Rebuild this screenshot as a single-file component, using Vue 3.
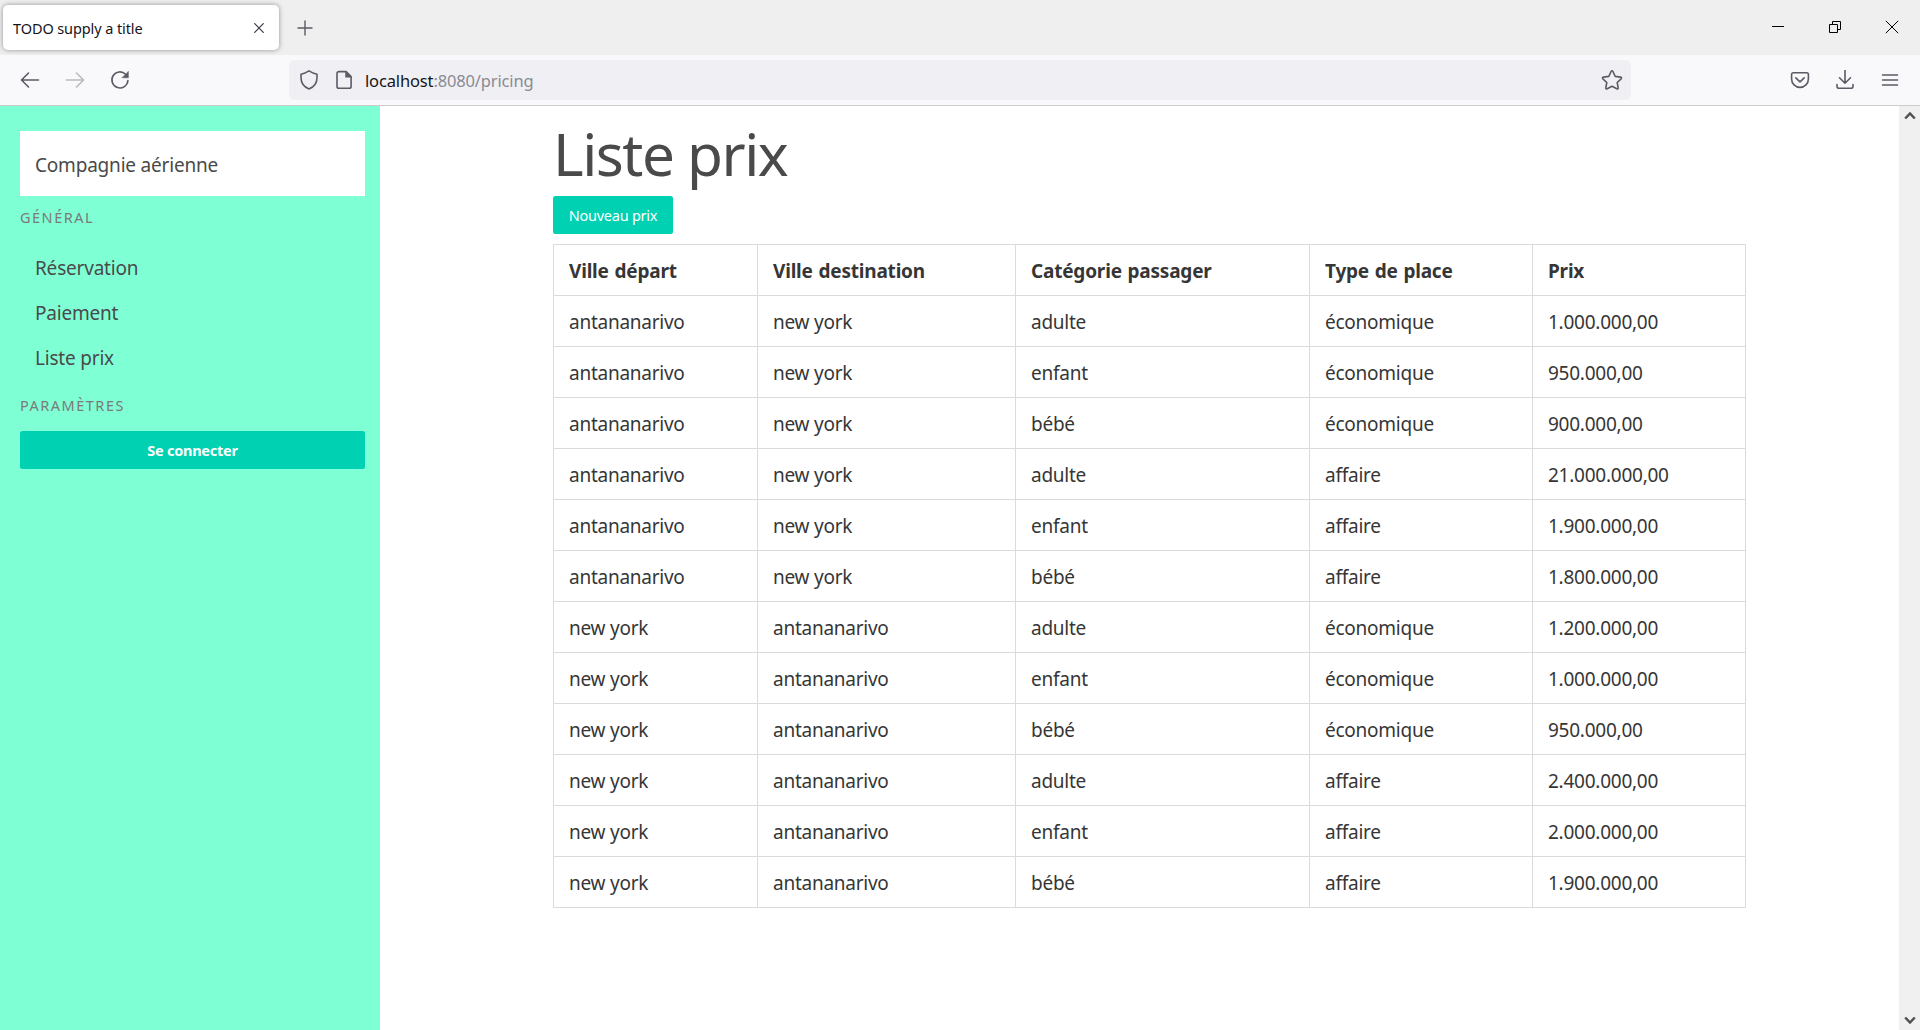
<script setup>
const headers = ['Ville départ', 'Ville destination', 'Catégorie passager', 'Type de place', 'Prix']
const tana = 'antananarivo'
const ny = 'new york'
const rows = [
  [tana, ny, 'adulte', 'économique', '1.000.000,00'],
  [tana, ny, 'enfant', 'économique', '950.000,00'],
  [tana, ny, 'bébé', 'économique', '900.000,00'],
  [tana, ny, 'adulte', 'affaire', '21.000.000,00'],
  [tana, ny, 'enfant', 'affaire', '1.900.000,00'],
  [tana, ny, 'bébé', 'affaire', '1.800.000,00'],
  [ny, tana, 'adulte', 'économique', '1.200.000,00'],
  [ny, tana, 'enfant', 'économique', '1.000.000,00'],
  [ny, tana, 'bébé', 'économique', '950.000,00'],
  [ny, tana, 'adulte', 'affaire', '2.400.000,00'],
  [ny, tana, 'enfant', 'affaire', '2.000.000,00'],
  [ny, tana, 'bébé', 'affaire', '1.900.000,00'],
]
const links = ['Réservation', 'Paiement', 'Liste prix']
</script>

<template>
  <div class="window">
    <header class="titlebar">
      <div class="tab">
        <span class="tab-title">TODO supply a title</span>
        <svg class="tab-close" width="12" height="12" viewBox="0 0 12 12"><path d="M1.7 1.7l8.6 8.6M10.3 1.7l-8.6 8.6" /></svg>
      </div>
      <svg class="new-tab" width="16" height="16" viewBox="0 0 16 16"><path d="M8 1v14M1 8h14" /></svg>
      <div class="controls">
        <svg width="14" height="14" viewBox="0 0 14 14"><path d="M1 6.5h12" /></svg>
        <svg width="14" height="14" viewBox="0 0 14 14"><path d="M1.5 4.5h8v8h-8zM4.5 4.5v-3h8v8h-3" /></svg>
        <svg width="14" height="14" viewBox="0 0 14 14"><path d="M.8 .8l12.4 12.4M13.2 .8L.8 13.2" /></svg>
      </div>
    </header>

    <nav class="toolbar">
      <div class="nav-buttons">
        <svg width="20" height="20" viewBox="0 0 20 20"><path d="M18.500 10H2.100M8.500 3l-7 7 7 7" /></svg>
        <svg class="dim" width="20" height="20" viewBox="0 0 20 20"><path d="M1.500 10h16.400M11.500 3l7 7-7 7" /></svg>
        <svg width="20" height="20" viewBox="0 0 20 20"><path d="M17.900 10.500a8 8 0 1 1-2.300-6.200" /><path class="solid" d="M18.400 1.600v6.200h-6.200z" /></svg>
      </div>
      <div class="urlbar">
        <svg class="shield" width="20" height="20" viewBox="0 0 20 20"><path d="M10 .9q3.700 2.400 8 3.300v3.300c0 5-2.800 9.400-8 11.500-5.200-2.100-8-6.500-8-11.500v-3.300q4.300-.9 8-3.300z" /></svg>
        <svg class="page" width="20" height="20" viewBox="0 0 20 20"><path d="M4.900 1.600h7.300l4.900 4.900v9.900a1.900 1.900 0 0 1-1.900 1.900h-10.300a1.900 1.900 0 0 1-1.900-1.900v-12.900a1.900 1.900 0 0 1 1.900-1.900z" /><path class="solid" d="M11.500 1.500v5.700h5.700z" /></svg>
        <div class="url"><span class="host">localhost</span><span>:8080/pricing</span></div>
        <svg class="star" width="22" height="22" viewBox="0 0 22 22"><path d="M10.100 2.500q.9-1.600 1.800 0l2.300 4.900 5.300.7q1.700.4.600 1.700l-3.900 3.700 1 5.300q.1 1.600-1.400 1l-4.800-2.600-4.800 2.600q-1.500.6-1.400-1l1-5.300-3.900-3.700q-1.100-1.300.6-1.700l5.300-.7z" /></svg>
      </div>
      <div class="actions">
        <svg width="20" height="20" viewBox="0 0 20 20"><path d="M3.300 2.800h13.400a1.700 1.700 0 0 1 1.700 1.700v4.500a8.400 8.400 0 0 1-16.800 0v-4.500a1.700 1.700 0 0 1 1.700-1.700z" /><path d="M5.800 7.800l4.200 4 4.200-4" /></svg>
        <svg width="20" height="20" viewBox="0 0 20 20"><path d="M10 .5v12.500M4.500 7.800l5.500 5.400 5.500-5.400M2 14.500v1.800a2 2 0 0 0 2 2h12a2 2 0 0 0 2-2v-1.800" /></svg>
        <svg width="20" height="20" viewBox="0 0 20 20"><path d="M2.500 5h15M2.500 10h15M2.500 15h15" /></svg>
      </div>
    </nav>

    <main class="viewport">
      <aside class="sidebar">
        <div class="brand">Compagnie aérienne</div>
        <p class="label">Général</p>
        <ul class="menu">
          <li v-for="link in links" :key="link">{{ link }}</li>
        </ul>
        <p class="label">Paramètres</p>
        <button class="button login">Se connecter</button>
      </aside>
      <section class="content">
        <h1>Liste prix</h1>
        <button class="button add">Nouveau prix</button>
        <table>
          <colgroup><col class="c1" /><col class="c2" /><col class="c3" /><col class="c4" /><col class="c5" /></colgroup>
          <thead>
            <tr><th v-for="h in headers" :key="h">{{ h }}</th></tr>
          </thead>
          <tbody>
            <tr v-for="(row, i) in rows" :key="i"><td v-for="(cell, j) in row" :key="j">{{ cell }}</td></tr>
          </tbody>
        </table>
      </section>
      <div class="scrollbar">
        <svg width="12" height="10" viewBox="0 0 12 10"><path d="M1.200 7.500l4.800-5 4.800 5" /></svg>
        <svg width="12" height="10" viewBox="0 0 12 10"><path d="M1.200 2.500l4.800 5 4.800-5" /></svg>
      </div>
    </main>
  </div>
</template>

<style>
body { margin: 0; overflow: hidden; }
</style>

<style scoped>
* { box-sizing: border-box; }
.window { width: 1920px; height: 1030px; display: flex; flex-direction: column; background: #fff; font-family: "Noto Sans", "Open Sans", sans-serif; color: #363636; }
svg { display: block; flex: none; fill: none; stroke: #5b5b66; stroke-width: 1.6; stroke-linecap: round; stroke-linejoin: round; }
.solid { fill: #5b5b66; stroke-width: .5; }

.titlebar { height: 55px; flex: none; display: flex; align-items: center; background: #efefef; }
.tab { width: 276px; flex: none; height: 45px; margin-left: 3px; padding: 0 14px 0 10px; display: flex; align-items: center; justify-content: space-between; background: #fff; border-radius: 5px; box-shadow: 0 0 5px rgba(0, 0, 0, .4); color: #15141a; font-size: 14.500px; letter-spacing: -.1px; white-space: nowrap; }
.tab-title { padding-top: 1px; }
.tab-close { stroke: #3a3a40; stroke-width: 1.2; }
.new-tab { margin-left: 18px; stroke-width: 1.4; }
.controls { margin: 0 21px 1px auto; display: flex; gap: 43px; }
.controls svg { stroke: #000; stroke-width: 1; stroke-linecap: butt; stroke-linejoin: miter; }

.toolbar { height: 51px; flex: none; display: flex; align-items: center; background: #f9f9fb; border-bottom: 1px solid #ccccd0; }
.nav-buttons { width: 289px; flex: none; padding-left: 20px; display: flex; gap: 25px; }
.dim { opacity: .4; }
.urlbar { width: 1342px; flex: none; height: 40px; padding: 0 8px 0 10px; display: flex; align-items: center; background: #f0f0f4; border-radius: 5px; }
.page { margin-left: 15px; }
.url { margin-left: 11px; font-size: 16.500px; color: #8a8a92; letter-spacing: -.15px; line-height: 24px; padding-top: 2px; }
.host { color: #15141a; }
.star { margin-left: auto; }
.actions { margin-left: auto; margin-right: 20px; display: flex; gap: 25px; }

.viewport { flex: 1; min-height: 0; display: flex; }
.sidebar { width: 380px; flex: none; padding: 25px 15px 0 20px; background: #7fffd4; color: #4a4a4a; font-size: 19px; letter-spacing: -.2px; }
.brand { height: 65px; padding: 18px 15px 0; background: #fff; line-height: 32px; }
.label { margin: 0; height: 20px; color: #7a7a7a; font-size: 14.500px; line-height: 20px; letter-spacing: 1.500px; text-transform: uppercase; }
.brand + .label { margin-top: 11px; }
.menu { list-style: none; margin: 19px 0 14px; padding: 0 15px; }
.menu li { height: 45px; line-height: 45px; }
.button { display: block; height: 38px; padding: 0; border: 0; border-radius: 2.500px; background: #00d1b2; color: #fff; font-family: inherit; font-size: 14.500px; line-height: 38px; letter-spacing: -.25px; }
.login { width: 345px; margin-top: 16px; font-weight: 700; }
.add { width: 120px; }

.content { flex: 1; padding-left: 173px; }
h1 { margin: 0; height: 90px; color: #4a4a4a; font-size: 58.500px; font-weight: 400; line-height: 95px; letter-spacing: -1.500px; }
table { width: 1193px; margin-top: 10px; table-layout: fixed; border-collapse: separate; border-spacing: 0; border: solid #dbdbdb; border-width: 1px 0 0 1px; font-size: 19px; letter-spacing: -.25px; }
th, td { height: 51px; padding: 2px 15px 0; border: solid #dbdbdb; border-width: 0 1px 1px 0; text-align: left; line-height: 30px; white-space: nowrap; }
th { font-weight: 700; letter-spacing: -.2px; word-spacing: 1px; }
.c1 { width: 204px; }
.c2 { width: 258px; }
.c3 { width: 294px; }
.c4 { width: 223px; }
.c5 { width: 213px; }

.scrollbar { width: 21px; flex: none; padding: 5px 4.500px; display: flex; flex-direction: column; justify-content: space-between; background: #f0f0f0; }
.scrollbar svg { stroke: #505050; stroke-width: 2.500; stroke-linecap: butt; stroke-linejoin: miter; }
</style>
